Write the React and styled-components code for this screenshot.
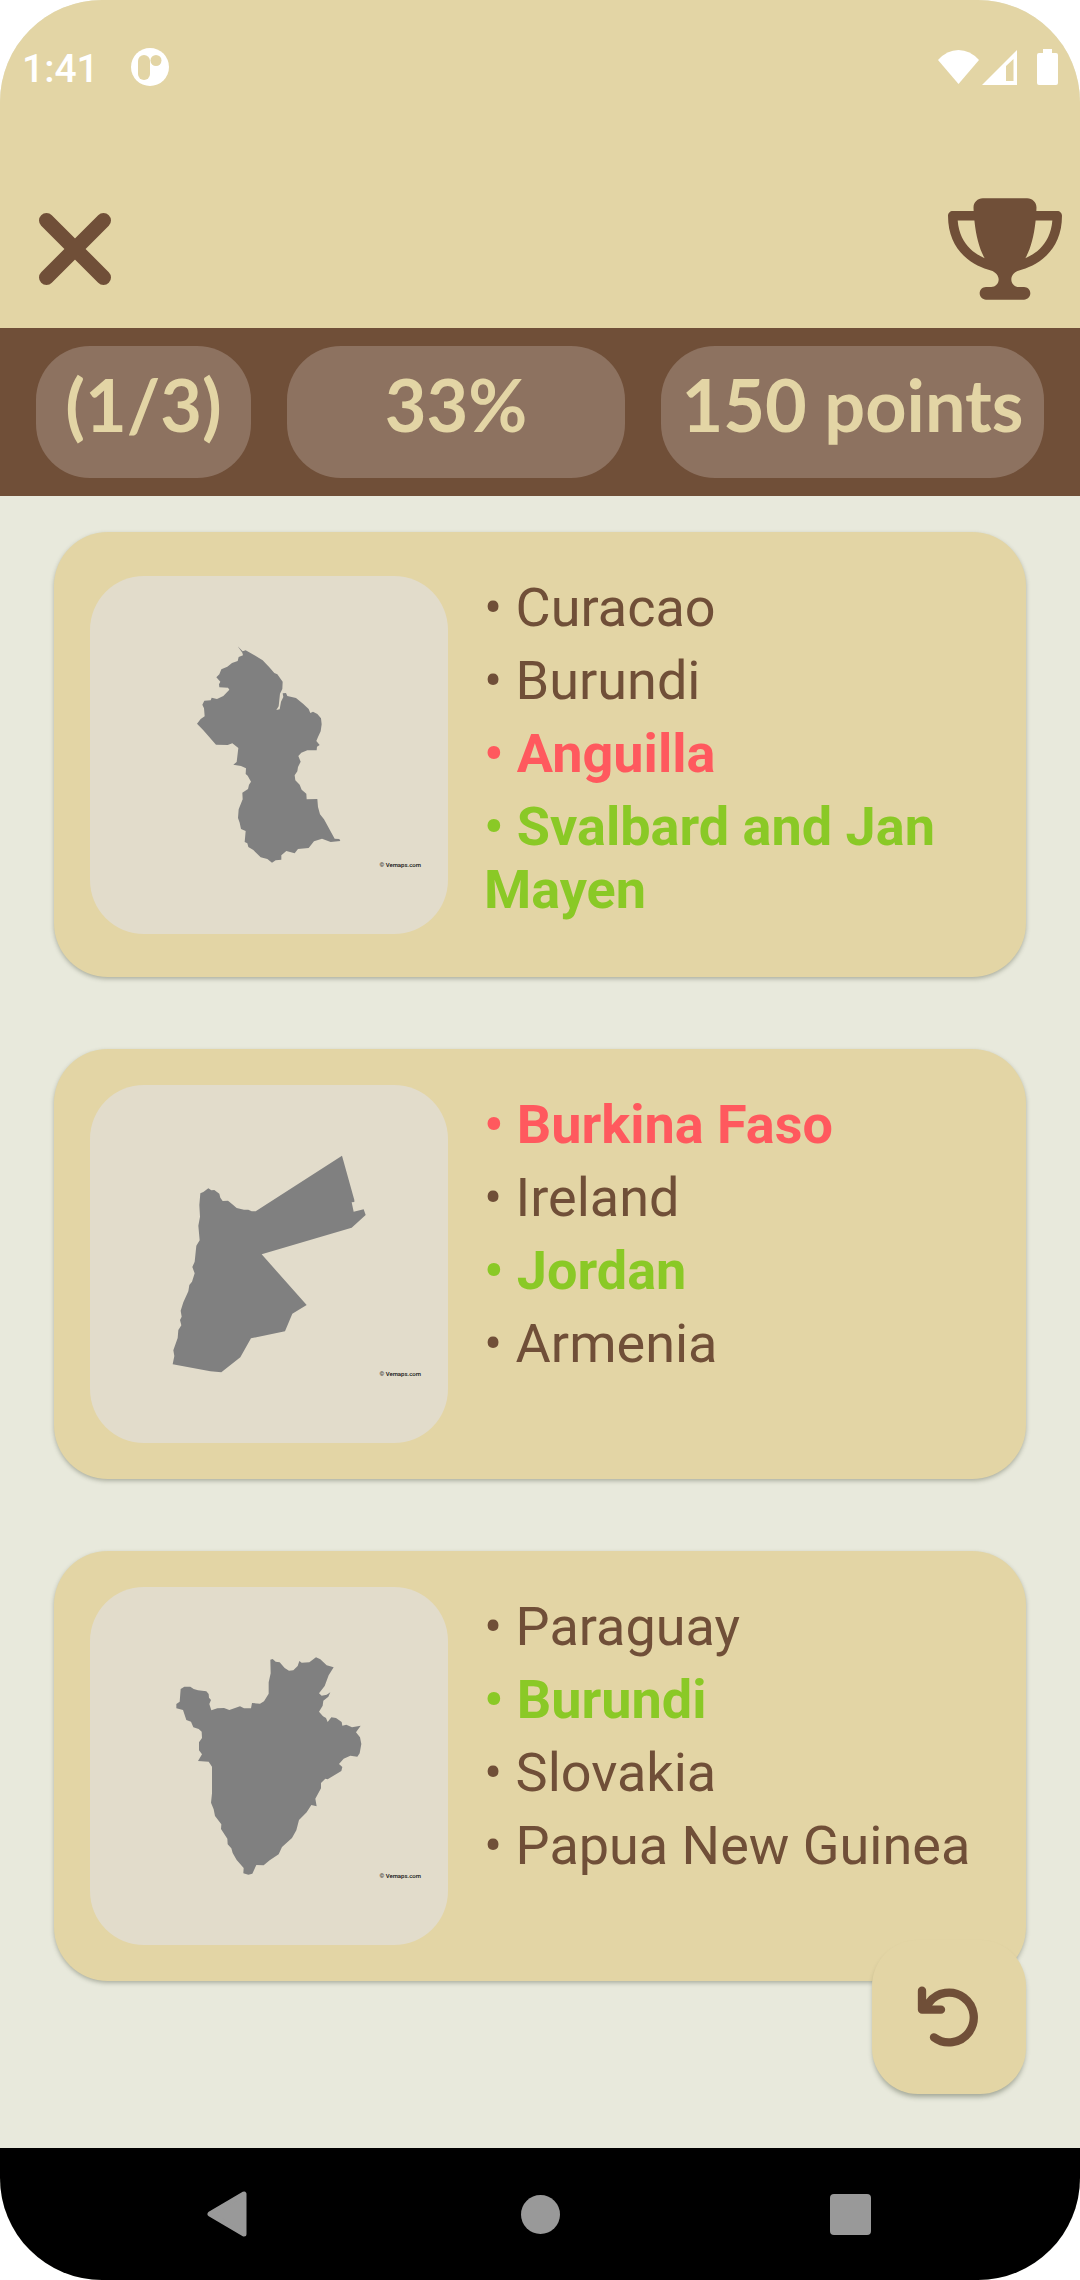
import React from "react";
import styled, { createGlobalStyle, css } from "styled-components";
import { FaTrophy } from "react-icons/fa6";

const sand = "#e3d5a5";
const brown = "#704f38";

const GlobalStyle = createGlobalStyle`
  *, *::before, *::after { box-sizing: border-box; }
  body { margin: 0; background: #ffffff; font-family: Roboto, sans-serif; }
  button { border: 0; padding: 0; background: none; cursor: pointer; }
  svg { display: block; }
`;

const Screen = styled.div`
  display: flex;
  flex-direction: column;
  min-height: 100vh;
  border-radius: 102px;
  overflow: hidden;
  background: #e8e9dc;
  color: ${brown};
`;

const Header = styled.header`
  background: ${sand};
`;

const StatusBar = styled.div`
  display: flex;
  align-items: center;
  justify-content: space-between;
  height: 134px;
  padding: 0 22px;
  color: #ffffff;
`;

const StatusGroup = styled.div`
  display: flex;
  align-items: center;
  gap: ${(p) => p.$gap}px;
`;

const Clock = styled.span`
  padding-top: 4px;
  font-size: 39px;
  line-height: 40px;
  font-weight: 500;
`;

const Toolbar = styled.div`
  display: flex;
  align-items: center;
  justify-content: space-between;
  padding: 64px 18px 28px 39px;
`;

const IconButton = styled.button`
  display: flex;
  align-items: center;
  justify-content: center;
  color: ${brown};
`;

const TrophyIcon = styled(FaTrophy)`
  width: 114px;
  height: 102px;
`;

const Stats = styled.section`
  display: grid;
  grid-template-columns: 215fr 338fr 383fr;
  gap: 36px;
  padding: 18px 36px;
  background: ${brown};
`;

const Pill = styled.div`
  display: flex;
  justify-content: center;
  height: 132px;
  padding-top: 14px;
  border-radius: 54px;
  background: #8d7260;
  color: ${sand};
  font-family: Lato, sans-serif;
  font-size: 72px;
  line-height: 88px;
  font-weight: 700;
  white-space: nowrap;
`;

const Main = styled.main`
  position: relative;
  flex: 1;
  padding: 36px 54px 54px;
`;

const CardList = styled.div`
  display: flex;
  flex-direction: column;
  gap: 72px;
`;

const Card = styled.article`
  display: flex;
  align-items: center;
  gap: 36px;
  padding: 36px;
  border-radius: 54px;
  background: ${sand};
  box-shadow: 0 2px 4px rgba(60, 70, 50, 0.35);
`;

const MapFigure = styled.figure`
  position: relative;
  flex: none;
  width: 358px;
  height: 358px;
  margin: 0;
  border-radius: 54px;
  background: #e2dccb;
`;

const Credit = styled.figcaption`
  position: absolute;
  right: 27px;
  bottom: 65px;
  color: #111111;
  font-size: 6px;
  line-height: 8px;
  font-weight: 500;
`;

const Answers = styled.ul`
  flex: 1;
  align-self: flex-start;
  margin: 0;
  padding: 8px 0 10px;
  list-style: none;
`;

const tones = {
  plain: css`
    color: ${brown};
  `,
  wrong: css`
    color: #ff595e;
    font-weight: 700;
  `,
  right: css`
    color: #8ac926;
    font-weight: 700;
  `,
};

const Answer = styled.li`
  padding-bottom: 10px;
  font-size: 54px;
  line-height: 63px;
  ${(p) => tones[p.$tone]}
`;

const RestartButton = styled(IconButton)`
  position: absolute;
  right: 54px;
  bottom: 54px;
  width: 154px;
  height: 154px;
  border-radius: 46px;
  background: ${sand};
  box-shadow: 0 4px 5px -1px rgba(60, 70, 50, 0.4);
`;

const NavBar = styled.nav`
  display: flex;
  height: 132px;
  padding: 0 74px;
  background: #000000;
`;

const NavButton = styled.button`
  display: flex;
  flex: 1;
  align-items: center;
  justify-content: center;
  color: #999999;
`;

const maps = {
  guyana: {
    shift: "translate(210 133)",
    d: "M233 78L248 93L257 90L286 106L308 120L328 141L343 158L352 162L368 184L367 206L360 220L356 258L349 269L359 267L363 244L370 230L368 219L378 218L382 227L408 233L430 251L446 266L451 278L459 274L472 281L483 294L485 312L482 333L474 350L469 362L479 374L471 379L470 390L442 390L424 397L415 407L422 424L414 440L412 453L404 465L406 480L419 493L425 508L439 520L440 537L472 536L474 560L480 582L492 597L524 655L538 656L541 662L512 665L486 655L462 663L446 683L414 686L404 699L379 692L364 705L364 718L347 720L336 727L322 716L302 711L280 689L265 680L262 669L254 665L257 632L243 626L239 607L234 593L236 567L248 537L247 517L264 506L267 493L273 484L263 466L257 461L258 444L243 437L220 433L230 425L235 383L217 369L203 374L168 373L130 330L111 310L122 296L134 288L132 264L127 253L133 241L152 240L155 232L171 236L190 227L208 208L204 202L178 201L177 192L181 184L169 171L178 162L184 147L202 139L216 128L233 122L236 110L249 105L247 97Z",
  },
  jordan: {
    shift: "translate(150 135)",
    d: "M181 190L190 186L205 175L214 181L223 180L238 191L241 203L248 213L264 212L276 222L290 234L312 239L325 239L335 244L347 244L606 77L643 210L643 216L635 217L641 245L671 238L677 255L635 293L365 373L500 525L457 551L435 604L333 625L301 682L244 727L211 724L98 703L103 678L100 661L113 624L115 600L124 586L120 570L125 560L122 542L130 517L145 484L148 465L156 455L164 430L157 411L164 395L169 347L179 331L175 287L180 260L178 225Z",
  },
  burundi: {
    shift: "translate(150 129)",
    d: "M122 177L133 170L151 170L161 177L174 181L199 184L206 192L207 203L213 210L208 222L214 241L232 235L252 234L268 240L300 229L312 235L333 235L336 219L360 221L372 214L386 191L386 157L392 130L391 89L398 87L407 95L419 97L434 114L447 122L460 121L473 108L478 93L485 98L508 97L528 82L541 88L560 106L581 112L566 136L554 168L537 190L545 197L560 194L571 187L565 200L550 212L548 227L537 245L549 259L558 264L563 276L574 262L588 264L605 276L607 287L619 284L636 292L662 287L648 307L660 322L664 342L659 370L652 380L631 377L611 386L597 402L607 411L604 423L563 448L556 446L543 459V475L526 506L530 529L514 525L500 547L477 570L469 601L456 624L426 651L416 673L389 691L371 706L349 705L337 731L325 734L310 730L311 714L290 690L278 669L274 655L263 643L262 626L243 597L244 583L225 558L221 538L213 518L216 490V410L206 395L174 393L186 373L177 361L177 337L186 324L185 305L176 297L160 292L153 275L139 270L129 240L109 235V222L119 215Z",
  },
};

const rounds = [
  {
    map: "guyana",
    answers: [
      ["Curacao", "plain"],
      ["Burundi", "plain"],
      ["Anguilla", "wrong"],
      ["Svalbard and Jan Mayen", "right"],
    ],
  },
  {
    map: "jordan",
    answers: [
      ["Burkina Faso", "wrong"],
      ["Ireland", "plain"],
      ["Jordan", "right"],
      ["Armenia", "plain"],
    ],
  },
  {
    map: "burundi",
    answers: [
      ["Paraguay", "plain"],
      ["Burundi", "right"],
      ["Slovakia", "plain"],
      ["Papua New Guinea", "plain"],
    ],
  },
];

function CountryMap({ name }) {
  const { shift, d } = maps[name];
  return (
    <MapFigure>
      <svg viewBox="0 0 1074 1074" width="100%" height="100%" aria-hidden="true">
        <path transform={shift} d={d} fill="#808080" />
      </svg>
      <Credit>© Vemaps.com</Credit>
    </MapFigure>
  );
}

export default function App() {
  return (
    <>
      <GlobalStyle />
      <Screen>
        <Header>
          <StatusBar>
            <StatusGroup $gap={32}>
              <Clock>1:41</Clock>
              <svg width="38" height="38" viewBox="0 0 38 38" aria-hidden="true">
                <circle cx="19" cy="19" r="19" fill="#ffffff" />
                <rect x="7" y="7" width="12" height="25" rx="6" fill={sand} />
                <circle cx="25" cy="12.5" r="5.5" fill={sand} />
              </svg>
            </StatusGroup>
            <StatusGroup $gap={3}>
              <svg width="41" height="36" viewBox="0 0 41 36" fill="currentColor" aria-hidden="true">
                <path d="M0 11Q9 1 20.500 1T41 11L20.500 35Z" />
              </svg>
              <svg width="52" height="36" viewBox="0 0 52 36" fill="currentColor" aria-hidden="true">
                <path fillRule="evenodd" d="M0 36L35 1V36ZM24 17V32H31.500V10Z" />
              </svg>
              <svg width="21" height="36" viewBox="0 0 21 36" fill="currentColor" aria-hidden="true">
                <path d="M6 0H15V4H19Q21 4 21 6V34Q21 36 19 36H2Q0 36 0 34V6Q0 4 2 4H6Z" />
              </svg>
            </StatusGroup>
          </StatusBar>
          <Toolbar>
            <IconButton type="button" aria-label="Close">
              <svg width="72" height="72" viewBox="0 0 72 72" aria-hidden="true">
                <path
                  d="M7.500 7.500L64.500 64.500M64.500 7.500L7.500 64.500"
                  stroke="currentColor"
                  strokeWidth="15"
                  strokeLinecap="round"
                />
              </svg>
            </IconButton>
            <IconButton type="button" aria-label="Leaderboard">
              <TrophyIcon aria-hidden="true" />
            </IconButton>
          </Toolbar>
        </Header>

        <Stats>
          <Pill>(1/3)</Pill>
          <Pill>33%</Pill>
          <Pill>150 points</Pill>
        </Stats>

        <Main>
          <CardList>
            {rounds.map((round) => (
              <Card key={round.map}>
                <CountryMap name={round.map} />
                <Answers>
                  {round.answers.map(([label, tone]) => (
                    <Answer key={label} $tone={tone}>
                      {`• ${label}`}
                    </Answer>
                  ))}
                </Answers>
              </Card>
            ))}
          </CardList>
          <RestartButton type="button" aria-label="Play again">
            <svg width="154" height="154" viewBox="0 0 462 462" aria-hidden="true">
              <path
                d="M150 152V209H207M154 205L171 188A74.500 74.500 0 1 1 186 292"
                fill="none"
                stroke="currentColor"
                strokeWidth="25"
                strokeLinecap="round"
                strokeLinejoin="round"
              />
            </svg>
          </RestartButton>
        </Main>

        <NavBar>
          <NavButton type="button" aria-label="Back">
            <svg width="46" height="46" viewBox="0 0 46 46" aria-hidden="true">
              <path
                d="M4 23L38 3V43Z"
                fill="currentColor"
                stroke="currentColor"
                strokeWidth="5"
                strokeLinejoin="round"
              />
            </svg>
          </NavButton>
          <NavButton type="button" aria-label="Home">
            <svg width="39" height="39" viewBox="0 0 39 39" aria-hidden="true">
              <circle cx="19.500" cy="19.500" r="19.500" fill="currentColor" />
            </svg>
          </NavButton>
          <NavButton type="button" aria-label="Recent apps">
            <svg width="41" height="41" viewBox="0 0 41 41" aria-hidden="true">
              <rect width="41" height="41" rx="4" fill="currentColor" />
            </svg>
          </NavButton>
        </NavBar>
      </Screen>
    </>
  );
}
